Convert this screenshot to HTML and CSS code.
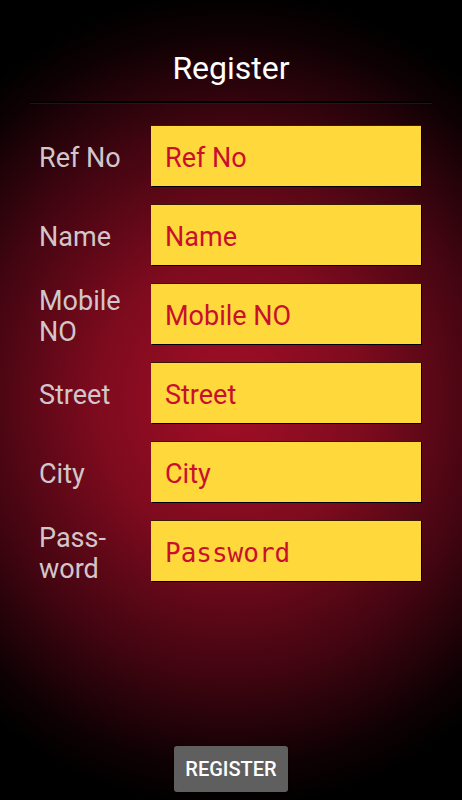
FILE: index.html
```html
<!DOCTYPE html>
<html>
<head>
<meta charset="utf-8" />
<title>Register</title>
<link rel="stylesheet" href="styles.css">
</head>
<body>
<div class="screen">
    <div class="bar"><h1>Register</h1></div>

    <form class="form">
        <div class="row">
            <label class="label">Ref No</label>
            <input class="field" type="text" placeholder="Ref No" />
        </div>
        <div class="row">
            <label class="label">Name</label>
            <input class="field" type="text" placeholder="Name" />
        </div>
        <div class="row">
            <label class="label">Mobile NO</label>
            <input class="field" type="text" placeholder="Mobile NO" />
        </div>
        <div class="row">
            <label class="label">Street</label>
            <input class="field" type="text" placeholder="Street" />
        </div>
        <div class="row">
            <label class="label">City</label>
            <input class="field" type="text" placeholder="City" />
        </div>
        <div class="row">
            <label class="label">Pass&shy;word</label>
            <input class="field field-mono" type="password" placeholder="Password" />
        </div>
    </form>

    <div class="actions"><button class="btn" type="button">REGISTER</button></div>
</div>
</body>
</html>
```

FILE: styles.css
```css
html, body, h1, form {margin:0; padding:0;}
body {
    background:#000;
    font-family:Roboto, "Noto Sans", sans-serif;
}
.screen {
    width:462px;
    height:800px;
    display:flex;
    flex-direction:column;
    background:radial-gradient(ellipse 380px 410px at 231px 400px, #a30e27 0%, #7e0b1e 35%, #430511 66%, #0e0103 90%, #000 100%);
    overflow:hidden;
}
.bar {
    margin:0 30px;
    height:101px;
    border-bottom:2px solid #000;
    box-shadow:0 1px 0 rgba(90,10,20,.6);
    display:flex;
    justify-content:center;
}
.bar h1 {
    margin-top:48px;
    font-size:32px;
    line-height:40px;
    font-weight:400;
    color:#fff;
}
.form {
    padding:22px 41px 0 39px;
    display:flex;
    flex-direction:column;
    gap:18px;
}
.row {
    display:flex;
    align-items:center;
    height:61px;
}
.label {
    width:100px;
    margin-right:12px;
    padding-top:6px;
    font-size:27px;
    line-height:31px;
    color:#d3c6ca;
    hyphens:manual;
}
.field {
    width:270px;
    height:61px;
    box-sizing:border-box;
    padding:3px 0 0 14px;
    border:none;
    border-top:1px solid #3a1a00;
    background:#ffd83c;
    box-shadow:1px 1px 0 #000;
    font-family:Roboto, "Noto Sans", sans-serif;
    font-size:27px;
    color:#c8102e;
    outline:none;
}
.field::placeholder {color:#c8102e; opacity:1;}
.field-mono {font-family:"DejaVu Sans Mono", monospace; font-size:26px;}
.actions {
    margin-top:auto;
    padding-bottom:8px;
    display:flex;
    justify-content:center;
}
.btn {
    width:114px;
    height:46px;
    border:none;
    border-radius:3px;
    background:#5f5f5f;
    color:#fff;
    font-family:Roboto, sans-serif;
    font-weight:500;
    font-size:20px;
    box-shadow:0 1px 2px rgba(0,0,0,.5);
}
```
